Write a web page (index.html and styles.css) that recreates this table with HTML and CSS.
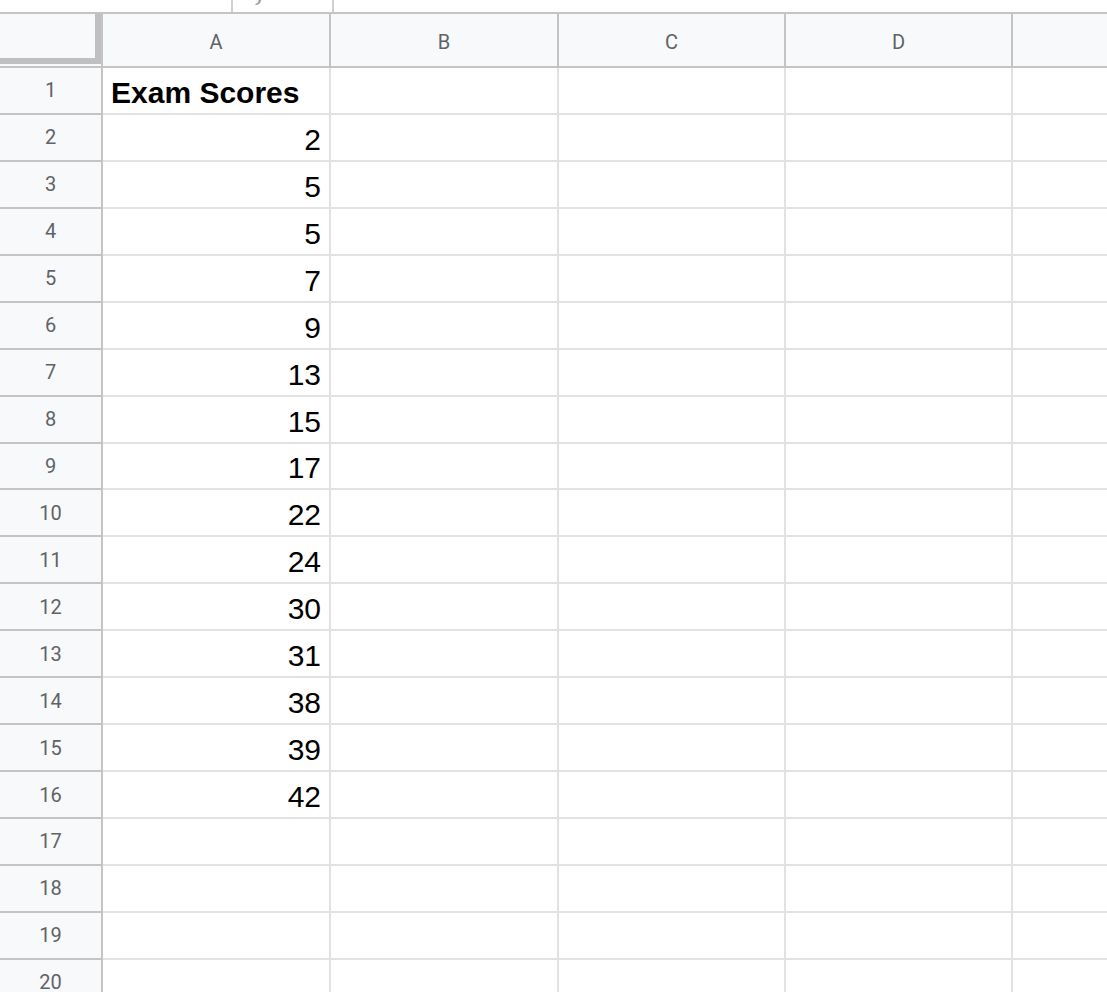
FILE: index.html
```html
<!doctype html>
<html>
  <head>
    <meta charset="utf-8">
    <title>Exam Scores - Sheet</title>
    <meta name="viewport" content="width=device-width">
    <link rel="stylesheet" href="styles.css">
  </head>
  <body>
    <div class="formula-strip">
      <div class="fx-box"><span class="fx">fx</span></div>
    </div>

    <div class="sheet">
      <div class="head corner"><div class="freeze"></div></div>
      <div class="head col">A</div>
      <div class="head col">B</div>
      <div class="head col">C</div>
      <div class="head col">D</div>
      <div class="head col last"></div>
    </div>

    <div class="sheet body" id="grid"></div>

    <script type="text/javascript">
      var scores = ['Exam Scores', 2, 5, 5, 7, 9, 13, 15, 17, 22, 24, 30, 31, 38, 39, 42];

      document.addEventListener("DOMContentLoaded", function() {
        var grid = document.getElementById('grid');
        var html = '';
        for (var r = 1; r <= 20; r++) {
          var v = scores[r - 1];
          html += '<div class="row-num">' + r + '</div>';
          if (r == 1) {
            html += '<div class="cell title">' + v + '</div>';
          } else if (v !== undefined) {
            html += '<div class="cell num">' + v + '</div>';
          } else {
            html += '<div class="cell"></div>';
          }
          html += '<div class="cell"></div><div class="cell"></div><div class="cell"></div><div class="cell last"></div>';
        }
        grid.innerHTML = html;
      });
    </script>
  </body>
</html>
```

FILE: styles.css
```css
html, body {
  margin: 0;
  height: 100%;
  overflow: hidden;
  background: #fff;
}
.formula-strip {
  height: 12px;
  border-bottom: 2px solid #c4c4c4;
  display: flex;
  padding-left: 231px;
}
.fx-box {
  width: 99px;
  height: 12px;
  border-left: 2px solid #d0d0d0;
  border-right: 2px solid #d0d0d0;
  overflow: hidden;
}
.fx {
  display: block;
  margin-top: -24px;
  padding-left: 24px;
  font-family: "DejaVu Serif", serif;
  font-style: italic;
  font-size: 26px;
  color: #9aa0a6;
}
.sheet {
  display: grid;
  grid-template-columns: 103px 228px 228px 227px 227px 1fr;
}
.head {
  height: 52px;
  background: #f8f9fa;
  border-bottom: 2px solid #c4c4c4;
  font-family: Roboto, "Liberation Sans", sans-serif;
  font-size: 20px;
  color: #5f6368;
}
.head.col {
  display: flex;
  align-items: center;
  justify-content: center;
  padding-top: 4px;
  box-sizing: border-box;
  height: 54px;
  border-right: 2px solid #c4c4c4;
}
.head.last {
  border-right: none;
}
.corner {
  box-sizing: border-box;
  height: 54px;
  border-right: 2px solid #c4c4c4;
}
.corner .freeze {
  box-sizing: border-box;
  width: 101px;
  height: 50px;
  border-right: 6px solid #c0c0c0;
  border-bottom: 6px solid #c0c0c0;
}
.body {
  grid-auto-rows: 46.94px;
}
.row-num {
  display: flex;
  align-items: center;
  justify-content: center;
  background: #f8f9fa;
  border-right: 2px solid #c4c4c4;
  border-bottom: 2px solid #c4c4c4;
  font-family: Roboto, "Liberation Sans", sans-serif;
  font-size: 20px;
  color: #5f6368;
}
.cell {
  display: flex;
  align-items: flex-end;
  border-right: 2px solid #e2e2e2;
  border-bottom: 2px solid #e2e2e2;
  padding: 0 8px 4px 8px;
  font-family: "Liberation Sans", Arial, sans-serif;
  font-size: 30px;
  line-height: 33px;
  color: #000;
  white-space: nowrap;
}
.cell.last {
  border-right: none;
}
.cell.title {
  font-weight: bold;
  padding-bottom: 4px;
}
.cell.num {
  justify-content: flex-end;
}
```
